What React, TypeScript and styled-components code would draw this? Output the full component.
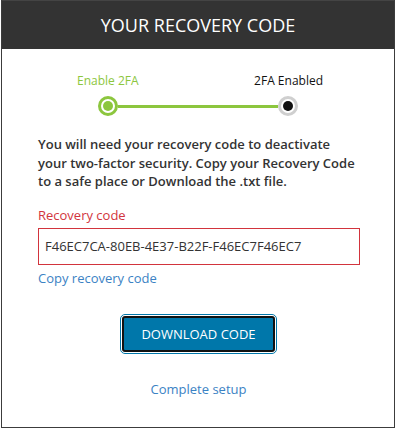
import React from "react";
import styled, { createGlobalStyle } from "styled-components";

const GlobalStyle = createGlobalStyle`
  body {
    margin: 0;
    background: #fff;
    font-family: "Open Sans", "Noto Sans", sans-serif;
  }
`;

const Card = styled.div`
  box-sizing: border-box;
  width: 394px;
  height: 428px;
  margin-left: 1px;
  border: 1px solid #3c3c3c;
  border-top: none;
  display: flex;
  flex-direction: column;
  background: #fff;
`;

const Header = styled.div`
  height: 49px;
  background: #333;
  border-top: 1px solid #444;
  box-sizing: border-box;
  display: flex;
  align-items: center;
  justify-content: center;
  color: #fff;
  font-size: 18px;
`;

const Body = styled.div`
  display: flex;
  flex-direction: column;
  padding: 0 35px 0 36px;
`;

const Steps = styled.div`
  display: flex;
  justify-content: space-between;
  margin: 23px 36px 0 39px;
  font-size: 12px;
`;

const StepLabel = styled.span<{ $active?: boolean }>`
  color: ${(p) => (p.$active ? "#8cc63e" : "#111")};
`;

const Track = styled.div`
  display: flex;
  align-items: center;
  margin: 7px 0 0 60px;
  width: 200px;
`;

const Dot = styled.div<{ $active?: boolean }>`
  box-sizing: border-box;
  width: 20px;
  height: 20px;
  border-radius: 50%;
  border: 3px solid ${(p) => (p.$active ? "#8cc63e" : "#cfcfcf")};
  background: #fff;
  display: flex;
  align-items: center;
  justify-content: center;
  flex-shrink: 0;

  &::after {
    content: "";
    width: 10px;
    height: 10px;
    border-radius: 50%;
    background: ${(p) => (p.$active ? "#8cc63e" : "#111")};
  }
`;

const Line = styled.div`
  flex: 1;
  height: 3px;
  background: #8cc63e;
`;

const Text = styled.p`
  margin: 19px 0 0;
  font-size: 13px;
  font-weight: 600;
  line-height: 18.5px;
  color: #333;
`;

const Label = styled.label`
  margin-top: 15px;
  font-size: 13px;
  color: #d2343d;
`;

const CodeInput = styled.input`
  box-sizing: border-box;
  margin-top: 4px;
  width: 322px;
  height: 37px;
  border: 1px solid #d2343d;
  padding: 0 6px;
  font-family: "Open Sans", "Noto Sans", sans-serif;
  font-size: 13px;
  color: #333;
  outline: none;
`;

const Link = styled.a<{ $center?: boolean }>`
  font-size: 13px;
  color: #3b82c4;
  text-decoration: none;
  cursor: pointer;
  align-self: ${(p) => (p.$center ? "center" : "flex-start")};
`;

const CopyLink = styled(Link)`
  margin-top: 4px;
`;

const DownloadButton = styled.button`
  align-self: center;
  margin-top: 29px;
  box-sizing: border-box;
  width: 153px;
  height: 36px;
  background: #0077aa;
  color: #fff;
  border: 2px solid #111;
  border-radius: 3px;
  outline: 1px solid #0077aa;
  outline-offset: 1px;
  font-family: "Open Sans", "Noto Sans", sans-serif;
  font-size: 13px;
  cursor: pointer;
`;

const FinishLink = styled(Link)`
  margin-top: 28px;
`;

export default function App() {
  return (
    <>
      <GlobalStyle />
      <Card>
        <Header>YOUR RECOVERY CODE</Header>
        <Body>
          <Steps>
            <StepLabel $active>Enable 2FA</StepLabel>
            <StepLabel>2FA Enabled</StepLabel>
          </Steps>
          <Track>
            <Dot $active />
            <Line />
            <Dot />
          </Track>
          <Text>
            You will need your recovery code to deactivate your two-factor
            security. Copy your Recovery Code to a safe place or Download the
            .txt file.
          </Text>
          <Label htmlFor="code">Recovery code</Label>
          <CodeInput
            id="code"
            readOnly
            value="F46EC7CA-80EB-4E37-B22F-F46EC7F46EC7"
          />
          <CopyLink>Copy recovery code</CopyLink>
          <DownloadButton>DOWNLOAD CODE</DownloadButton>
          <FinishLink $center>Complete setup</FinishLink>
        </Body>
      </Card>
    </>
  );
}
